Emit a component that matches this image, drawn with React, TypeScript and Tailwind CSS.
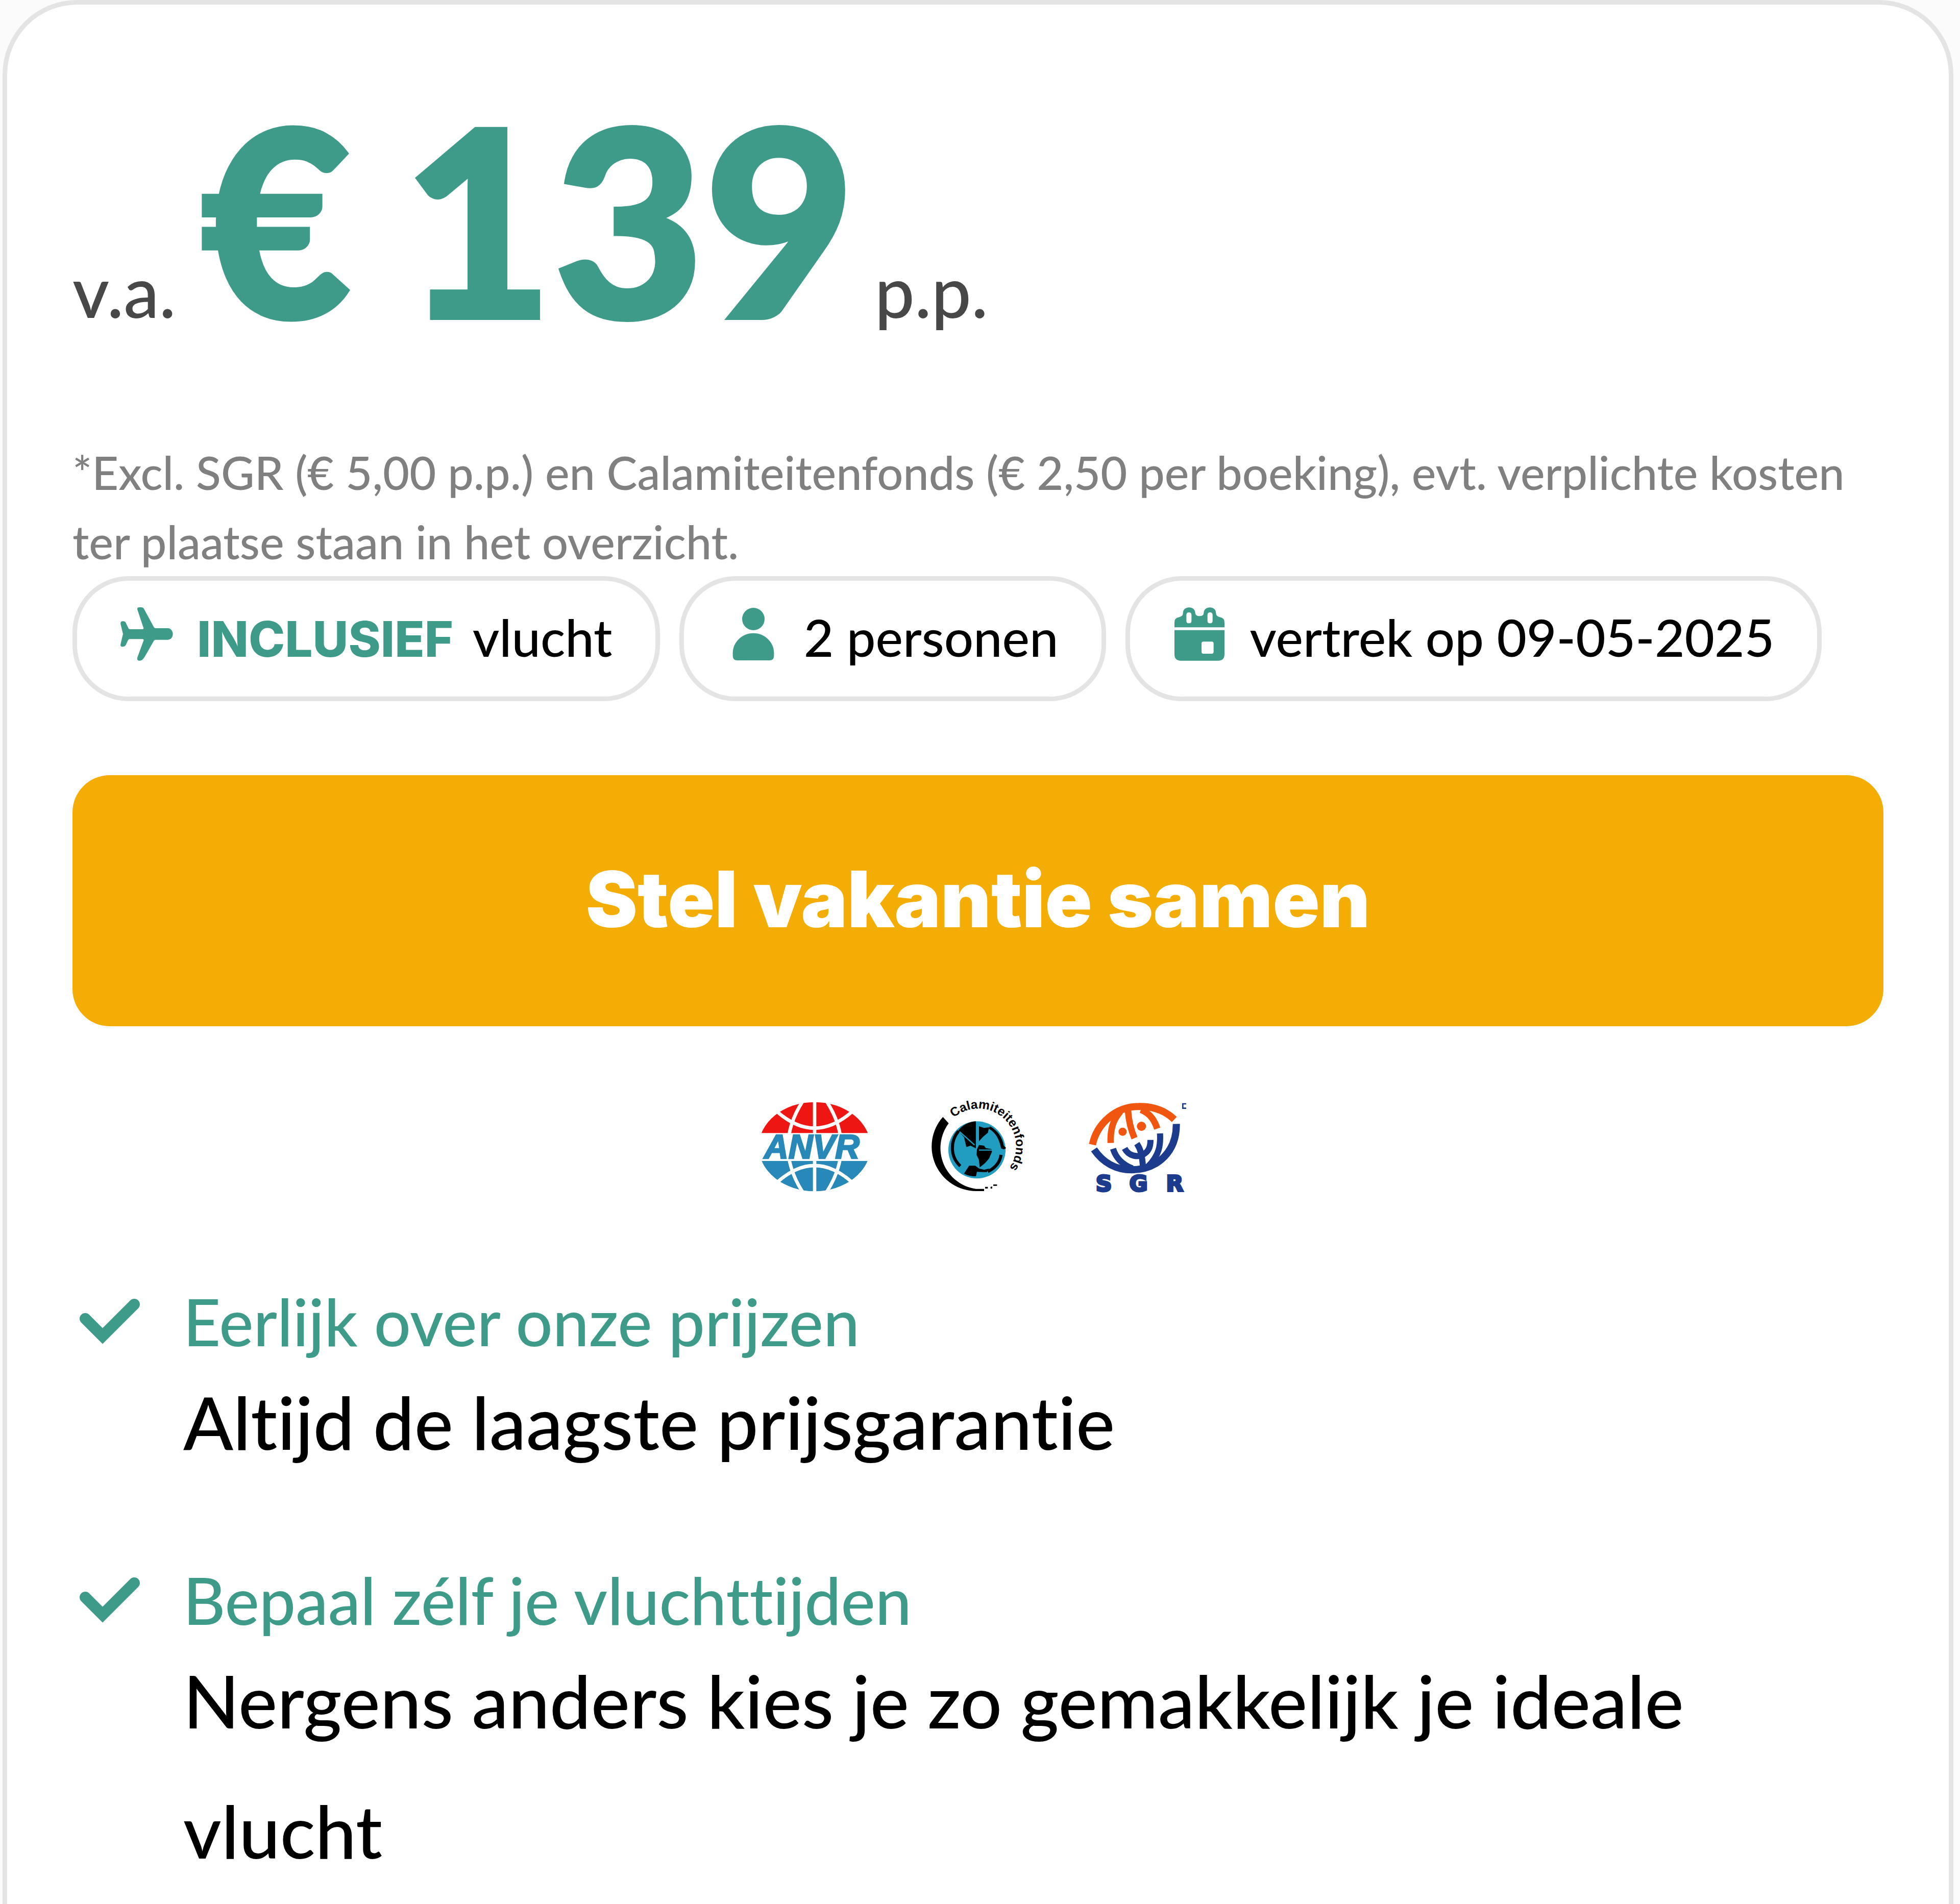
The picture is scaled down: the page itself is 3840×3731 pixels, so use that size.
import { ReactNode } from "react";

type UspType = {
  title: string;
  description: string;
};

const usps: UspType[] = [
  {
    title: "Eerlijk over onze prijzen",
    description: "Altijd de laagste prijsgarantie",
  },
  {
    title: "Bepaal zélf je vluchttijden",
    description: "Nergens anders kies je zo gemakkelijk je ideale vlucht",
  },
];

const PlaneIcon = () => (
  <svg viewBox="76 85 312 318" className="h-[106px] w-[104px]" fill="currentColor" aria-hidden="true">
    <path d="M178 100 Q176 88 190 88 H202 Q212 88 217 97 L276 206 Q279 211 286 211 H358 C376 211 387 230 387 245 C387 262 376 279 358 279 H286 Q279 279 276 284 L222 378 Q208 402 192 402 Q174 402 178 384 L215 284 Q218 275 208 275 H134 Q127 275 124 281 L110 310 Q104 320 92 320 Q76 320 80 304 L94 245 L80 188 Q77 170 94 170 Q106 170 111 180 L126 212 Q129 217 136 217 H206 Q217 217 214 208 Z" />
  </svg>
);

const PersonIcon = () => (
  <svg viewBox="81 91 312 318" className="h-[106px] w-[104px]" fill="currentColor" aria-hidden="true">
    <circle cx="237" cy="163" r="66" />
    <path d="M237 246 C300 246 358 296 358 362 V380 Q358 406 332 406 H142 Q116 406 116 380 V362 C116 296 174 246 237 246 Z" />
  </svg>
);

const CalendarIcon = () => (
  <svg viewBox="79 85 312 318" className="h-[106px] w-[104px]" fill="currentColor" fillRule="evenodd" aria-hidden="true">
    <path d="M88 206 V178 Q88 150 116 146 C130 142 138 136 138 122 C138 78 210 78 210 122 Q212 140 235 140 Q260 140 260 122 C260 78 332 78 332 122 C332 136 340 142 354 146 Q382 150 382 178 V206 Z M158 134 V168 Q158 182 173 182 Q188 182 188 168 V134 Q188 118 173 118 Q158 118 158 134 Z M282 134 V168 Q282 182 297 182 Q312 182 312 168 V134 Q312 118 297 118 Q282 118 282 134 Z" />
    <path d="M88 222 H382 V364 Q382 402 344 402 H126 Q88 402 88 364 Z M258 290 Q247 290 247 301 V350 Q247 361 258 361 H307 Q318 361 318 350 V301 Q318 290 307 290 Z" />
  </svg>
);

const CheckIcon = () => (
  <svg viewBox="34 44 120 90" className="h-[90px] w-[120px]" fill="none" stroke="currentColor" aria-hidden="true">
    <path d="M46 84 L80 118 L142 56" strokeWidth="22" strokeLinecap="round" />
  </svg>
);

const AnvrLogo = () => (
  <svg viewBox="155 118 624 528" className="h-[176px] w-[208px] overflow-visible" role="img" aria-label="ANVR">
    <defs>
      <clipPath id="anvr-top">
        <rect x="155" y="118" width="624" height="184" />
      </clipPath>
      <clipPath id="anvr-bottom">
        <rect x="155" y="466" width="624" height="180" />
      </clipPath>
    </defs>
    <ellipse cx="467" cy="382" rx="328" ry="262" fill="#ee1613" clipPath="url(#anvr-top)" />
    <ellipse cx="467" cy="382" rx="328" ry="262" fill="#2888b7" clipPath="url(#anvr-bottom)" />
    <g stroke="#fff" strokeWidth="20" fill="none">
      <path d="M467 116 V648" />
      <path d="M396 116 Q226 382 396 648" />
      <path d="M538 116 Q708 382 538 648" />
      <path d="M246 176 Q467 370 688 176" />
      <path d="M246 592 Q467 394 688 592" />
    </g>
    <text
      x="170"
      y="451"
      fontSize="198"
      fill="#2888b7"
      stroke="#2888b7"
      strokeWidth="8"
      className="font-['Liberation_Sans',sans-serif] font-bold italic"
    >
      ANVR
    </text>
  </svg>
);

const CalamiteitenfondsLogo = () => (
  <svg viewBox="122 118 564 528" className="h-[176px] w-[188px] overflow-visible" role="img" aria-label="Calamiteitenfonds">
    <defs>
      <path id="calamiteiten-arc" d="M261 212 A222 222 0 0 1 566 534 L520 580" />
    </defs>
    <path d="M198 207 A262 262 0 0 0 392 643 H440 V630 H392 A242 242 0 0 1 232 245 Z" />
    <path d="M446 618 h16 v10 h-16 Z M478 618 l10 -2 v12 h-10 Z M494 604 h22 v8 h-22 Z" />
    <circle cx="398" cy="401" r="168" fill="#209dc0" />
    {/* land masses */}
    <path d="M392 233 C350 235 312 256 288 288 L322 326 L336 384 L360 376 L392 392 Z" />
    <path d="M410 262 L440 272 L470 268 L462 300 L436 322 L410 350 Z" />
    <path d="M410 372 L440 376 L450 390 L484 396 L486 412 L470 450 L446 478 L414 504 L410 460 L396 430 L398 398 Z" />
    <path d="M352 494 L388 494 L410 510 L440 518 L470 510 L456 532 L398 530 L392 556 C364 556 340 550 322 540 Z" />
    <path d="M474 262 C520 286 548 330 556 376 L570 390 L556 398 L540 392 C530 340 510 300 468 276 Z" />
    <g fill="none" stroke="#000">
      <path d="M290 290 C240 350 240 440 300 496" strokeWidth="18" />
      <path d="M540 430 C534 470 510 505 462 528" strokeWidth="18" />
    </g>
    <path d="M296 294 L384 372 M410 402 H486" stroke="#209dc0" strokeWidth="7" fill="none" />
    <text fontSize="74" className="font-['Liberation_Sans',sans-serif] font-bold">
      <textPath href="#calamiteiten-arc">Calamiteitenfonds</textPath>
    </text>
  </svg>
);

const SgrLogo = () => (
  <svg viewBox="160 118 600 528" className="h-[176px] w-[200px] overflow-visible" role="img" aria-label="SGR">
    <g fill="none" stroke="#f0560f" strokeWidth="38">
      <path d="M185 370 C210 250 320 146 455 146 C540 144 612 170 666 222" strokeWidth="42" />
      <path d="M292 360 C290 290 300 230 350 175" />
      <path d="M394 170 C398 230 410 280 432 332" />
      <path d="M470 165 C530 190 550 230 566 276" />
    </g>
    <circle cx="362" cy="294" r="24" fill="#f0560f" />
    <circle cx="473" cy="262" r="27" fill="#f0560f" />
    <g fill="none" stroke="#1c3b8c" strokeWidth="36">
      <path d="M194 398 C250 480 330 520 420 518 C570 514 680 410 678 248" strokeWidth="42" />
      <path d="M306 394 C320 440 355 485 420 510" />
      <path d="M374 392 C400 440 450 444 480 430 C512 412 526 390 526 342" />
      <path d="M446 364 C470 400 476 430 482 500" />
      <path d="M582 304 C586 370 580 430 510 500" />
      <path d="M736 130 H716 V156 H736" strokeWidth="8" />
    </g>
    <g
      fill="#1c3b8c"
      stroke="#1c3b8c"
      strokeWidth="12"
      fontSize="130"
      textAnchor="middle"
      className="font-['DejaVu_Sans',sans-serif] font-bold"
    >
      <text x="252" y="644">S</text>
      <text x="456" y="644">G</text>
      <text x="668" y="644">R</text>
    </g>
  </svg>
);

const Pill = ({ icon, children }: { icon: ReactNode; children: ReactNode }) => {
  return (
    <li className="flex h-[245px] items-center gap-[47px] rounded-[110px] border-[9px] border-[#e4e4e4] px-[84px] pb-[6px] text-[101px] leading-none">
      <span className="pb-[14px] text-[#3e9b89]">{icon}</span>
      <span className="flex items-baseline gap-[38px] whitespace-nowrap">{children}</span>
    </li>
  );
};

const App = () => {
  return (
    <main className="min-h-screen bg-[#fbfbfb] pr-[13px] pl-[5px] font-['Lato_Medium','Lato',sans-serif] font-medium text-black [font-variant-ligatures:none]">
      <section className="min-h-screen rounded-t-[146px] border-x-[9px] border-t-[9px] border-[#e4e4e4] bg-white px-[128px] pt-[158px]">
        <div className="flex items-baseline text-[139px] leading-none text-[#484848]">
          <span>v.a.</span>
          <strong className="mr-[38px] ml-[48px] flex gap-[100px] font-['Lato',sans-serif] text-[510px] leading-[518px] font-black text-[#3e9b89] [-webkit-text-stroke:8px_#3e9b89]">
            <span>€</span>
            <span>139</span>
          </strong>
          <span>p.p.</span>
        </div>

        <p className="mt-[172px] text-[90px] leading-[136px] text-[#808080]">
          *Excl. SGR (€ 5,00 p.p.) en Calamiteitenfonds (€ 2,50 per boeking), evt. verplichte kosten
          ter plaatse staan in het overzicht.
        </p>

        <ul className="flex flex-wrap gap-[38px]">
          <Pill icon={<PlaneIcon />}>
            <strong className="font-['Inter',sans-serif] text-[96px] font-extrabold text-[#3e9b89]">INCLUSIEF</strong>
            <span>vlucht</span>
          </Pill>
          <Pill icon={<PersonIcon />}>2 personen</Pill>
          <Pill icon={<CalendarIcon />}>vertrek op 09-05-2025</Pill>
        </ul>

        <button
          type="button"
          className="mt-[145px] h-[492px] w-full rounded-[73px] bg-[#f4ad04] pb-[6px] font-['Inter',sans-serif] text-[152px] leading-none font-black text-white"
        >
          Stel vakantie samen
        </button>

        <div className="mt-[148px] flex justify-center gap-[122px] pr-[8px]">
          <AnvrLogo />
          <CalamiteitenfondsLogo />
          <SgrLogo />
        </div>

        <ul className="mt-[185px] flex flex-col gap-[153px]">
          {usps.map((usp) => (
            <li key={usp.title} className="flex gap-[72px]">
              <span className="flex h-[138px] w-[145px] shrink-0 items-center justify-center text-[#3e9b89]">
                <CheckIcon />
              </span>
              <div>
                <h3 className="text-[127px] leading-[138px] text-[#3e9b89]">{usp.title}</h3>
                <p className="text-[144px] leading-[255px]">{usp.description}</p>
              </div>
            </li>
          ))}
        </ul>
      </section>
    </main>
  );
};

export default App;
